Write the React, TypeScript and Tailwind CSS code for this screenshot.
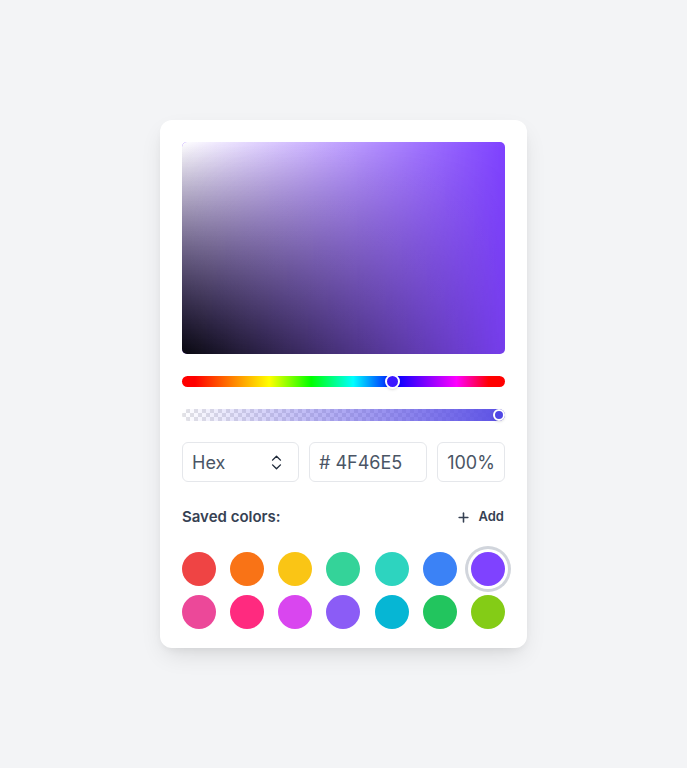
import { ChevronsUpDown, Plus } from 'lucide-react';

const saved = [
    ['#ef4444', '#f97316', '#fac515', '#34d399', '#2dd4bf', '#3b82f6', '#7f42ff'],
    ['#ec4899', '#ff2a7f', '#d946ef', '#8b5cf6', '#06b6d4', '#22c55e', '#84cc16'],
];

export default function App() {
    return (
        <div className="min-h-screen bg-[#f3f4f6] flex justify-center pt-[120px] font-['Inter',sans-serif]">
            <div className="w-[367px] h-[528px] bg-white rounded-xl shadow-[0_10px_25px_-5px_rgba(0,0,0,0.12),0_4px_10px_-4px_rgba(0,0,0,0.08)] p-[22px]">
                {/* saturation / value area */}
                <div className="relative h-[212px] rounded-[5px] overflow-hidden bg-[#7f42ff]">
                    <div className="absolute inset-0 bg-[linear-gradient(to_right,#fff,rgba(255,255,255,0))] [mask-image:linear-gradient(to_bottom,#000,rgba(0,0,0,0.35))]" />
                    <div className="absolute inset-0 bg-[linear-gradient(to_top,#08080f,rgba(8,8,15,0))] [mask-image:linear-gradient(to_right,#000,rgba(0,0,0,0.08))]" />
                </div>

                {/* hue */}
                <div className="relative mt-[22px] h-[11px] rounded-full bg-[linear-gradient(to_right,#ff0000_4%,#ffff00_27%,#00ff00_40%,#00ffff_53%,#0000ff_66%,#ff00ff_85%,#ff0000_95%)]">
                    <div className="absolute left-[203px] top-[-2px] w-[15px] h-[15px] rounded-full border-[2.5px] border-white bg-[#3b17ff] shadow-sm" />
                </div>

                {/* alpha */}
                <div className="relative mt-[22px] h-[12px] rounded-full bg-[repeating-conic-gradient(#e2e2e6_0%_25%,#ffffff_0%_50%)] bg-[length:8px_8px]">
                    <div className="absolute inset-0 rounded-full bg-[linear-gradient(to_right,rgba(91,80,229,0),#5b50e5)]" />
                    <div className="absolute right-0 top-[0px] w-[12px] h-[12px] rounded-full border-[2px] border-white bg-[#4f46e5] shadow-sm" />
                </div>

                {/* inputs */}
                <div className="mt-[21px] flex gap-[10px] text-[18px] text-gray-600">
                    <div className="w-[117px] h-[40px] border border-gray-200 rounded-md flex items-center justify-between pl-[9px] pr-[12px]">
                        <span>Hex</span>
                        <ChevronsUpDown size={19} strokeWidth={1.75} className="text-gray-800" />
                    </div>
                    <div className="w-[118px] h-[40px] border border-gray-200 rounded-md flex items-center pl-[9px]">
                        # 4F46E5
                    </div>
                    <div className="flex-1 h-[40px] border border-gray-200 rounded-md flex items-center justify-center">
                        100%
                    </div>
                </div>

                {/* saved colors header */}
                <div className="mt-[25px] flex items-center justify-between h-[20px]">
                    <span className="text-[15px] font-semibold text-gray-700">Saved colors:</span>
                    <button className="flex items-center gap-[8px] text-[13px] font-semibold text-gray-700 pr-[1px]">
                        <Plus size={15} strokeWidth={2.5} />
                        Add
                    </button>
                </div>

                {/* swatches */}
                <div className="mt-[25px] flex flex-col gap-[9px]">
                    {saved.map((row, i) => (
                        <div key={i} className="flex justify-between">
                            {row.map((c, j) => {
                                const selected = i === 0 && j === 6;
                                return (
                                    <div
                                        key={c}
                                        className={
                                            selected
                                                ? 'w-[34px] h-[34px] rounded-full ring-[3px] ring-offset-[3px] ring-offset-white ring-gray-300'
                                                : 'w-[34px] h-[34px] rounded-full'
                                        }
                                        style={{ backgroundColor: c }}
                                    />
                                );
                            })}
                        </div>
                    ))}
                </div>
            </div>
        </div>
    );
}
